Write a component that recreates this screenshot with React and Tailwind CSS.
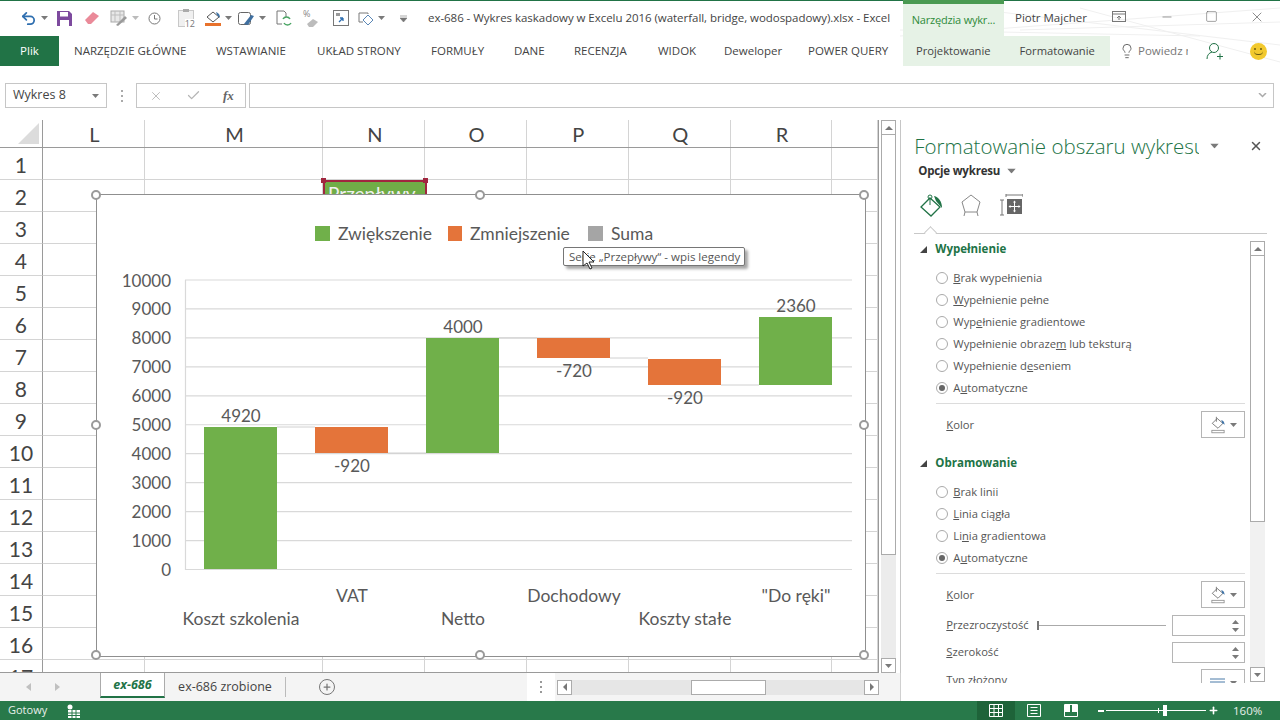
import { Undo2, Minus, Square, X, Lightbulb, Check, Plus } from "lucide-react";

const ui = "font-['Open_Sans','Liberation_Sans',sans-serif]";
const green = "#217346";

const columns = [
  ["L", 102],
  ["M", 179],
  ["N", 102],
  ["O", 102],
  ["P", 102],
  ["Q", 102],
  ["R", 102],
  ["", 46],
];
const rows = [1, 2, 3, 4, 5, 6, 7, 8, 9, 10, 11, 12, 13, 14, 15, 16, 17];

const tabs = [
  ["NARZĘDZIE GŁÓWNE", 113],
  ["WSTAWIANIE", 72],
  ["UKŁAD STRONY", 85],
  ["FORMUŁY", 54],
  ["DANE", 31],
  ["RECENZJA", 55],
  ["WIDOK", 37],
  ["Deweloper", 55],
  ["POWER QUERY", 80],
];

function Caret({ className = "" }) {
  return (
    <svg width="7" height="4" viewBox="0 0 7 4" className={className}>
      <path d="M0 0h7L3.5 4z" fill="#7a7a7a" />
    </svg>
  );
}

function PaintIcon() {
  return (
    <svg width="18" height="18" viewBox="0 0 22 22">
      <path d="M10 3l7 6-6 6-7-6z" fill="#fff" stroke="#666" />
      <path d="M9 1v6" stroke="#666" />
      <path d="M15 5c3 1 4 3 4 6-1-1-2-2-3-2z" fill="#3f74a8" />
      <rect x="3.5" y="17.5" width="15" height="3" fill="#fff" stroke="#8a8a8a" />
    </svg>
  );
}

function QuickBar() {
  return (
    <div className="flex w-[410px] items-center pl-[21px]">
      <Undo2 size={17} color="#2f6fb0" strokeWidth={2.5} className="-ml-[1px]" />
      <Caret className="ml-[4px]" />
      <svg width="15" height="15" viewBox="0 0 15 15" className="ml-[9px]">
        <path d="M0 0h12l3 3v12H0z" fill="#7d4a9e" />
        <rect x="3" y="1" width="8" height="4.5" fill="#fff" />
        <rect x="3" y="9" width="9" height="6" fill="#fff" />
      </svg>
      <svg width="16" height="14" viewBox="0 0 16 14" className="ml-[12px]">
        <path d="M1 9l8-8 6 4-8 8H4z" fill="#ea8a99" />
      </svg>
      <svg width="17" height="16" viewBox="0 0 17 16" className="ml-[10px]">
        <rect x="1" y="1" width="13" height="11" fill="#e8e8e8" stroke="#a9a9a9" />
        <path d="M1 5h13M5 1v11M10 1v11" stroke="#bdbdbd" />
        <path d="M6 15l9-9 2 2-9 8z" fill="#9a9a9a" />
      </svg>
      <Caret className="ml-[5px] opacity-50" />
      <svg width="13" height="13" viewBox="0 0 13 13" className="ml-[9px]">
        <circle cx="6.5" cy="6.5" r="5.5" fill="none" stroke="#777" />
        <path d="M6.5 3v4h3" fill="none" stroke="#777" />
      </svg>
      <div className="relative ml-[17px] h-[17px] w-[16px] border border-[#c8c8c8] bg-[#f0f0f0]">
        <span className="absolute left-[4px] top-[-2px] h-[3px] w-[6px] bg-[#aaa]" />
        <span className="absolute bottom-[-2px] right-[-2px] bg-white text-[9px] leading-none text-[#777]">12</span>
      </div>
      <div className="ml-[11px] flex flex-col items-center">
        <svg width="15" height="12" viewBox="0 0 15 12">
          <path d="M7 1l6 5-6 5-6-5z" fill="#fff" stroke="#555" />
          <path d="M10 1c3 1 4 3 4 6l-3-3z" fill="#3f74a8" />
        </svg>
        <div className="h-[3px] w-[16px] bg-[#e8722c]" />
      </div>
      <Caret className="ml-[4px]" />
      <svg width="17" height="15" viewBox="0 0 17 15" className="ml-[6px]">
        <rect x="0.5" y="1.5" width="12" height="12" rx="2" fill="#fff" stroke="#666" />
        <path d="M6 13l7-9 3 1-6 9z" fill="#3f6fa0" />
      </svg>
      <Caret className="ml-[4px]" />
      <svg width="16" height="17" viewBox="0 0 16 17" className="ml-[10px]">
        <path d="M1 1h7l2 2v4M1 1v13h5" fill="#fff" stroke="#777" />
        <path d="M14 9a4 4 0 0 0-7 0M8 13a4 4 0 0 0 7 0" fill="none" stroke="#4aa564" strokeWidth="1.5" />
      </svg>
      <div className="relative ml-[11px] h-[17px] w-[16px]">
        <span className="absolute left-0 top-[-2px] text-[9px] leading-[11px] text-[#888]">%</span>
        <svg width="12" height="9" viewBox="0 0 12 9" className="absolute bottom-0 right-0">
          <path d="M0 6l6-5 5 3-5 5H2z" fill="#bcbcbc" />
        </svg>
      </div>
      <svg width="16" height="16" viewBox="0 0 16 16" className="ml-[14px]">
        <rect x="0.5" y="0.5" width="15" height="15" fill="#fff" stroke="#777" />
        <path d="M3 3h4v3H3z" fill="#999" />
        <path d="M6 12l4-4M10 8h-3M10 8v3" stroke="#2f6fb0" strokeWidth="1.3" fill="none" />
      </svg>
      <svg width="16" height="15" viewBox="0 0 16 15" className="ml-[9px]">
        <path d="M5 11H1V2h9v1" fill="none" stroke="#7a7a7a" />
        <path d="M10 4l5 5-5 5-5-5z" fill="#fff" stroke="#5a86b5" />
      </svg>
      <Caret className="ml-[4px]" />
      <svg width="7" height="7" viewBox="0 0 7 7" className="ml-[15px]">
        <path d="M0 1h7M0 3h7L3.500 7z" fill="#777" stroke="#777" strokeWidth="0.6" />
      </svg>
    </div>
  );
}

function TitleBar() {
  return (
    <div className={`relative flex h-[35px] items-center pb-[1px] text-[11.5px] text-[#444] ${ui}`}>
      <QuickBar />
      <div className="absolute left-[428px] w-[470px] whitespace-nowrap tracking-[-0.04px]">
        ex-686 - Wykres kaskadowy w Excelu 2016 (waterfall, bridge, wodospadowy).xlsx - Excel
      </div>
      <div className="absolute left-[903px] top-[-1px] flex h-[36px] w-[101px] items-center justify-center border-t-[4px] border-[#4a9a52] bg-[#e6f2e6] text-[11px] tracking-[-0.2px] text-[#2e8b3a]">
        Narzędzia wykr...
      </div>
      <div className="absolute left-[1015px] whitespace-nowrap">Piotr Majcher</div>
      <svg width="14" height="11" viewBox="0 0 14 11" className="absolute left-[1112px] top-[10px]">
        <rect x="0.500" y="0.500" width="13" height="10" fill="none" stroke="#777" />
        <path d="M0 3h14M7 9V5M5 7l2-2 2 2" stroke="#777" fill="none" />
      </svg>
      <Minus size={14} strokeWidth={1} color="#555" className="absolute left-[1160px] top-[9px]" />
      <Square size={13} strokeWidth={1} color="#555" className="absolute left-[1205px] top-[9px]" />
      <X size={16} strokeWidth={1} color="#555" className="absolute left-[1249px] top-[8px]" />
    </div>
  );
}

function RibbonTabs() {
  return (
    <div className={`relative flex h-[30px] items-center text-[11.5px] text-[#444] ${ui}`}>
      <div className="flex h-[30px] w-[59px] items-center justify-center bg-[#217346] text-white">Plik</div>
      <div className="ml-[15px] flex gap-[29px]">
        {tabs.map(([t, w]) => (
          <span key={t} style={{ width: w }} className="whitespace-nowrap">
            {t}
          </span>
        ))}
      </div>
      <div className="ml-[15px] flex h-[30px] w-[207px] items-center gap-[29px] bg-[#e6f2e6] pl-[13px] text-[11.2px]">
        <span>Projektowanie</span>
        <span>Formatowanie</span>
      </div>
      <Lightbulb size={16} strokeWidth={1.3} color="#555" className="ml-[9px]" />
      <span className="ml-[3px] w-[50px] overflow-hidden whitespace-nowrap text-[#777]">Powiedz mi</span>
      <svg width="17" height="18" viewBox="0 0 17 18" fill="none" stroke={green} className="ml-[18px]">
        <circle cx="8" cy="6" r="4.500" />
        <path d="M1 17c0-4 2-6 5-7M11 14.500h6M14 11.500v6" />
      </svg>
      <div className="relative ml-[27px] h-[17px] w-[17px] rounded-full bg-[#f2c92e]">
        <span className="absolute left-[4px] top-[5px] h-[2px] w-[2px] rounded-full bg-[#6a5a10]" />
        <span className="absolute left-[10px] top-[5px] h-[2px] w-[2px] rounded-full bg-[#6a5a10]" />
        <span className="absolute left-[4px] top-[8px] h-[4px] w-[9px] rounded-b-full border-b border-[#6a5a10]" />
      </div>
    </div>
  );
}

function FormulaBar() {
  return (
    <div className={`mt-[17px] flex h-[25px] items-center pl-[5px] text-[#444] ${ui}`}>
      <div className="flex h-full w-[102px] items-center justify-between border border-[#c6c6c6] pl-[7px] pr-[7px] text-[12.500px]">
        Wykres 8
        <Caret />
      </div>
      <div className="ml-[14px] mr-[13px] flex flex-col gap-[3px]">
        <span className="h-[2px] w-[2px] bg-[#aaa]" />
        <span className="h-[2px] w-[2px] bg-[#aaa]" />
        <span className="h-[2px] w-[2px] bg-[#aaa]" />
      </div>
      <div className="flex h-full w-[110px] items-center border border-[#c6c6c6]">
        <X size={14} color="#b5b5b5" strokeWidth={1.5} className="ml-[12px]" />
        <Check size={15} color="#b5b5b5" strokeWidth={2} className="ml-[23px]" />
        <span className="ml-[22px] font-['Liberation_Serif',serif] text-[13px] font-bold italic text-[#666]">fx</span>
      </div>
      <div className="ml-[3px] flex h-full w-[1025px] items-center justify-end border border-[#c6c6c6] pr-[6px]">
        <svg width="9" height="5" viewBox="0 0 9 5">
          <path d="M1 0l3.500 3.500L8 0" fill="none" stroke="#aaa" strokeWidth="1.500" />
        </svg>
      </div>
    </div>
  );
}

function Grid() {
  return (
    <div className="font-['Lato','Liberation_Sans',sans-serif] text-[#444]">
      <div className="flex h-[28px] border-b border-[#9a9a9a]">
        <div className="relative w-[43px] border-r border-[#9a9a9a]">
          <div className="absolute bottom-[3px] right-[3px] h-0 w-0 border-b-[21px] border-l-[21px] border-b-[#dcdcdc] border-l-transparent" />
        </div>
        {columns.map(([c, w], i) => (
          <div
            key={i}
            style={{ width: w }}
            className="flex items-center justify-center border-r border-[#d4d4d4] pl-[2px] text-[20px]"
          >
            {c}
          </div>
        ))}
      </div>
      {rows.map((r) => (
        <div key={r} className="flex h-[32px]">
          <div className="flex w-[43px] items-center justify-center border-b border-r border-b-[#d4d4d4] border-r-[#9a9a9a] pt-[2px] text-[21px]">
            {r}
          </div>
          {columns.map(([c, w], i) => (
            <div key={i} style={{ width: w }} className="border-b border-r border-[#d4d4d4]" />
          ))}
        </div>
      ))}
    </div>
  );
}

function Handle({ className }) {
  return <div className={`absolute h-[10px] w-[10px] rounded-full border-2 border-[#9a9a9a] bg-white ${className}`} />;
}

const gridY = [0, 1, 2, 3, 4, 5, 6, 7, 8, 9, 10];
const bars = [
  [204, 427, 569, "#70b04a", "4920", 241, 422],
  [315, 427, 453, "#e4743a", "-920", 352, 472],
  [426, 338, 453, "#70b04a", "4000", 463, 333],
  [537, 338, 358, "#e4743a", "-720", 574, 377],
  [648, 359, 385, "#e4743a", "-920", 685, 404],
  [759, 317, 385, "#70b04a", "2360", 796, 312],
];
const connectors = [
  [277, 315, 427],
  [388, 426, 453],
  [499, 537, 338],
  [610, 648, 358],
  [721, 759, 385],
];
const categories = [
  ["Koszt szkolenia", 241, 625],
  ["VAT", 352, 602],
  ["Netto", 463, 625],
  ["Dochodowy", 574, 602],
  ["Koszty stałe", 685, 625],
  ['"Do ręki"', 796, 602],
];

function WaterfallChart() {
  return (
    <svg
      width="768"
      height="461"
      viewBox="97 195 768 461"
      className="font-['Lato','Liberation_Sans',sans-serif]"
      fill="#595959"
    >
      {gridY.map((g) => (
        <path key={g} d={`M185 ${569.5 - g * 28.95}H852`} stroke="#d9d9d9" strokeWidth="1.200" />
      ))}
      <path d="M185.500 280V570" stroke="#d9d9d9" strokeWidth="1.200" />
      {gridY.map((g) => (
        <text key={g} x="171" y={576 - g * 28.95} textAnchor="end" fontSize="17">
          {g * 1000}
        </text>
      ))}
      {connectors.map(([a, b, y], i) => (
        <path key={i} d={`M${a} ${y}H${b}`} stroke="#d0d0d0" />
      ))}
      {bars.map(([x, y1, y2, fill, label, cx, ty]) => (
        <g key={cx}>
          <rect x={x} y={y1} width="73" height={y2 - y1} fill={fill} />
          <text x={cx} y={ty} textAnchor="middle" fontSize="17">
            {label}
          </text>
        </g>
      ))}
      {categories.map(([label, cx, y]) => (
        <text key={label} x={cx} y={y} textAnchor="middle" fontSize="17.500">
          {label}
        </text>
      ))}
      <rect x="315" y="226" width="15" height="15" fill="#70b04a" />
      <text x="338" y="240" fontSize="17.500">Zwiększenie</text>
      <rect x="448" y="226" width="14" height="15" fill="#e4743a" />
      <text x="470" y="240" fontSize="17.500">Zmniejszenie</text>
      <rect x="588" y="226" width="15" height="15" fill="#a5a5a5" />
      <text x="611" y="240" fontSize="17.500">Suma</text>
    </svg>
  );
}

function Sheet() {
  return (
    <div className="relative h-[553px] w-[880px] overflow-hidden border-b border-r border-[#9a9a9a]">
      <Grid />
      {/* kształt pod wykresem */}
      <div className="absolute left-[323px] top-[60px] h-[30px] w-[104px] overflow-hidden border-2 border-[#a0263f] bg-[#70ad47] pl-[3px] font-['Lato',sans-serif] text-[19px] leading-[24px] whitespace-nowrap text-[#f0f0f0]">
        Przepływy
      </div>
      <div className="absolute left-[321px] top-[58px] h-[5px] w-[5px] bg-[#a0263f]" />
      <div className="absolute left-[423px] top-[58px] h-[5px] w-[5px] bg-[#a0263f]" />
      <div className="absolute left-[97px] top-[75px] h-[461px] w-[768px] bg-white outline outline-[1.500px] outline-[#8f8f8f]">
        <WaterfallChart />
      </div>
      <Handle className="left-[91px] top-[70px]" />
      <Handle className="left-[475px] top-[70px]" />
      <Handle className="left-[859px] top-[70px]" />
      <Handle className="left-[91px] top-[300px]" />
      <Handle className="left-[859px] top-[300px]" />
      <Handle className="left-[91px] top-[530px]" />
      <Handle className="left-[475px] top-[530px]" />
      <Handle className="left-[859px] top-[530px]" />
      <div
        className={`absolute left-[563px] top-[127px] flex h-[19px] w-[182px] items-center rounded-[2px] border border-[#767676] bg-white pl-[5px] text-[11.5px] whitespace-nowrap text-[#555] shadow-[3px_3px_3px_rgba(0,0,0,0.35)] ${ui}`}
      >
        Serie „Przepływy“ - wpis legendy
      </div>
      <svg width="13" height="20" viewBox="0 0 13 20" className="absolute left-[582px] top-[130px]">
        <path d="M1 1v15l4-3 3 6 2-1-3-6h5z" fill="#fff" stroke="#222" />
      </svg>
    </div>
  );
}

function VerticalScroll() {
  return (
    <div className="ml-[2px] flex h-[553px] w-[15px] flex-col">
      <div className="flex h-[15px] items-center justify-center border border-[#ababab] bg-white">
        <svg width="8" height="4" viewBox="0 0 8 4">
          <path d="M0 4h8L4 0z" fill="#777" />
        </svg>
      </div>
      <div className="h-[420px] border-x border-b border-[#ababab] bg-white" />
      <div className="flex-1 bg-[#ececec]" />
      <div className="flex h-[15px] items-center justify-center border border-[#ababab] bg-white">
        <Caret />
      </div>
    </div>
  );
}

function SectionTitle({ children }) {
  return (
    <div className="flex h-[20px] items-center pt-[2px] text-[11.5px] font-bold text-[#217346]">
      <svg width="7" height="7" viewBox="0 0 7 7" className="mr-[8px] ml-[7px]">
        <path d="M7 0v7H0z" fill="#444" />
      </svg>
      {children}
    </div>
  );
}

function Radio({ label, at, checked }) {
  return (
    <div className="flex h-[22px] items-center pl-[23px] text-[11.2px] text-[#555]">
      <span className="mr-[5px] flex h-[12px] w-[12px] items-center justify-center rounded-full border border-[#aaa] bg-white">
        {checked && <span className="h-[6px] w-[6px] rounded-full bg-[#666]" />}
      </span>
      <span>
        {label.slice(0, at)}
        <span className="underline">{label[at]}</span>
        {label.slice(at + 1)}
      </span>
    </div>
  );
}

function ColorButton() {
  return (
    <div className="flex h-[27px] items-center justify-between pl-[33px] pr-[5px] text-[11.2px] text-[#555]">
      <span className="pt-[2px]">
        <span className="underline">K</span>olor
      </span>
      <div className="flex h-[27px] w-[44px] items-center justify-center gap-[3px] border border-[#b5b5b5]">
        <PaintIcon />
        <Caret />
      </div>
    </div>
  );
}

function SpinBox() {
  return (
    <div className="flex h-[21px] w-[73px] flex-col items-end justify-center gap-[4px] border border-[#b5b5b5] pr-[5px]">
      <svg width="7" height="4" viewBox="0 0 7 4">
        <path d="M0 4h7L3.500 0z" fill="#7a7a7a" />
      </svg>
      <Caret />
    </div>
  );
}

function FormatPane() {
  return (
    <div className={`ml-[4px] flex h-[581px] w-[380px] flex-col border-l border-[#c6c6c6] pt-[10px] ${ui}`}>
      <div className="relative flex h-[32px] items-center pl-[13px]">
        <div className="w-[285px] overflow-hidden whitespace-nowrap text-[20.5px] font-light text-[#217346]">
          Formatowanie obszaru wykresu
        </div>
        <Caret className="ml-[12px] scale-125" />
        <X size={14} strokeWidth={2.500} color="#555" className="ml-[31px]" />
      </div>
      <div className="flex h-[18px] items-center pl-[17px] text-[11.5px] font-bold tracking-[-0.2px] text-[#333]">
        Opcje wykresu
        <Caret className="ml-[8px] scale-125" />
      </div>
      <div className="flex h-[50px] items-center pl-[18px]">
        <svg width="25" height="24" viewBox="0 0 25 24">
          <path d="M11 5l10 9-9 9-10-9z" fill="#fff" stroke="#217346" strokeWidth="1.300" />
          <circle cx="11" cy="4" r="2" fill="none" stroke="#217346" />
          <path d="M11 5v7" stroke="#217346" />
          <path d="M15 3c5 1 8 6 8 12l-6-7z" fill="#217346" />
        </svg>
        <svg width="22" height="24" viewBox="0 0 22 24" className="ml-[16px]">
          <path d="M11 2l9 7-3 10H5L2 9z" fill="#fff" stroke="#888" />
          <path d="M5 19l-1 4M17 19l1 4" stroke="#888" />
        </svg>
        <svg width="23" height="22" viewBox="0 0 23 22" className="ml-[18px]">
          <path d="M2 6v15M0 6h4M0 21h4M6 1h17M6 0v3M23 0v3" stroke="#777" fill="none" />
          <rect x="7" y="5" width="15" height="15" fill="#666" />
          <path d="M14.500 8v9M10 12.500h9" stroke="#fff" />
          <path d="M14.500 6.500l-1.500 2h3zM14.500 18.500l-1.500-2h3zM8.500 12.500l2-1.500v3zM20.500 12.500l-2-1.500v3z" fill="#fff" />
        </svg>
      </div>
      <div className="relative mx-[13px] mt-[3px] h-[1px] bg-[#c8c8c8]">
        <div className="absolute left-[12px] top-[-5px] h-[9px] w-[9px] rotate-45 border-l border-t border-[#c8c8c8] bg-white" />
      </div>
      <div className="flex min-h-0 flex-1 pt-[4px]">
        <div className="h-[445px] w-[349px] overflow-hidden pl-[12px]">
          <SectionTitle>Wypełnienie</SectionTitle>
          <div className="h-[9px]" />
          <Radio label="Brak wypełnienia" at={0} />
          <Radio label="Wypełnienie pełne" at={0} />
          <Radio label="Wypełnienie gradientowe" at={3} />
          <Radio label="Wypełnienie obrazem lub teksturą" at={18} />
          <Radio label="Wypełnienie deseniem" at={13} />
          <Radio label="Automatyczne" at={1} checked />
          <div className="ml-[23px] mr-[5px] mt-[4px] h-[1px] bg-[#dcdcdc]" />
          <div className="h-[7px]" />
          <ColorButton />
          <div className="h-[14px]" />
          <SectionTitle>Obramowanie</SectionTitle>
          <div className="h-[9px]" />
          <Radio label="Brak linii" at={0} />
          <Radio label="Linia ciągła" at={0} />
          <Radio label="Linia gradientowa" at={2} />
          <Radio label="Automatyczne" at={1} checked />
          <div className="ml-[23px] mr-[5px] mt-[4px] h-[1px] bg-[#dcdcdc]" />
          <div className="h-[7px]" />
          <ColorButton />
          <div className="mt-[7px] flex items-center pl-[33px] pr-[5px] text-[11.2px] text-[#555]">
            <span className="w-[91px]">
              <span className="underline">P</span>rzezroczystość
            </span>
            <div className="relative h-[1px] w-[129px] bg-[#aaa]">
              <div className="absolute left-0 top-[-4px] h-[9px] w-[2px] bg-[#777]" />
            </div>
            <div className="ml-[6px]">
              <SpinBox />
            </div>
          </div>
          <div className="mt-[6px] flex items-center justify-between pl-[33px] pr-[5px] text-[11.2px] text-[#555]">
            <span>
              <span className="underline">S</span>zerokość
            </span>
            <SpinBox />
          </div>
          <div className="mt-[6px] flex items-start justify-between pl-[33px] pr-[5px] text-[11.2px] text-[#555]">
            <span className="mt-[3px]">
              <span className="underline">T</span>yp złożony
            </span>
            <div className="flex h-[27px] w-[44px] items-center justify-center gap-[5px] border border-[#b5b5b5]">
              <svg width="15" height="9" viewBox="0 0 15 9">
                <path d="M0 1h15M0 4h15M0 8h15" stroke="#4a7ba8" />
              </svg>
              <Caret />
            </div>
          </div>
        </div>
        <div className="mt-[3px] flex h-[441px] w-[15px] flex-col">
          <div className="flex h-[15px] items-center justify-center border border-[#ababab] bg-white">
            <svg width="8" height="4" viewBox="0 0 8 4">
              <path d="M0 4h8L4 0z" fill="#777" />
            </svg>
          </div>
          <div className="h-[266px] border-x border-b border-[#ababab] bg-white" />
          <div className="flex-1 bg-[#f1f1f1]" />
          <div className="flex h-[15px] items-center justify-center border border-[#ababab] bg-white">
            <Caret />
          </div>
        </div>
      </div>
    </div>
  );
}

function SheetTabs() {
  return (
    <div className={`flex h-[28px] w-[901px] items-center border-r border-[#d0d0d0] bg-[#f4f4f4] text-[12.5px] text-[#444] ${ui}`}>
      <div className="flex w-[100px] items-center pl-[26px]">
        <svg width="5" height="8" viewBox="0 0 5 8"><path d="M5 0v8L0 4z" fill="#c0c0c0" /></svg>
        <svg width="5" height="8" viewBox="0 0 5 8" className="ml-[24px]"><path d="M0 0v8l5-4z" fill="#c0c0c0" /></svg>
      </div>
      <div className="flex h-[25px] w-[65px] items-center justify-center self-start border-x border-b-2 border-x-[#ababab] border-b-[#217346] bg-white pt-[1px] font-bold italic text-[#217346]">
        ex-686
      </div>
      <div className="flex w-[120px] justify-center">ex-686 zrobione</div>
      <div className="h-[20px] w-[1px] bg-[#bbb]" />
      <div className="ml-[33px] flex h-[16px] w-[16px] items-center justify-center rounded-full border border-[#777]">
        <Plus size={10} strokeWidth={3} color="#777" />
      </div>
      <div className="ml-[192px] flex h-full w-[28px] flex-col items-center justify-center gap-[3px] bg-white">
        <span className="h-[2px] w-[2px] bg-[#999]" />
        <span className="h-[2px] w-[2px] bg-[#999]" />
        <span className="h-[2px] w-[2px] bg-[#999]" />
      </div>
      <div className="ml-[2px] flex h-[15px] w-[322px] bg-[#e6e6e6]">
        <div className="flex w-[15px] items-center justify-center border border-[#ababab] bg-white">
          <svg width="4" height="8" viewBox="0 0 4 8"><path d="M4 0v8L0 4z" fill="#777" /></svg>
        </div>
        <div className="ml-[119px] w-[75px] border border-[#ababab] bg-white" />
        <div className="ml-auto flex w-[15px] items-center justify-center border border-[#ababab] bg-white">
          <svg width="4" height="8" viewBox="0 0 4 8"><path d="M0 0v8l4-4z" fill="#777" /></svg>
        </div>
      </div>
    </div>
  );
}

function StatusBar() {
  return (
    <div className={`flex h-[19px] items-center bg-[#28794a] text-[11px] text-[#e8f0ea] ${ui}`}>
      <span className="ml-[8px] w-[39px]">Gotowy</span>
      <svg width="13" height="14" viewBox="0 0 13 14" className="ml-[20px]">
        <circle cx="3" cy="3" r="2.500" fill="#fff" />
        <rect x="1" y="6" width="12" height="8" fill="#fff" />
        <path d="M1 9h12M1 11.500h12M5 6v8M9 6v8" stroke="#28794a" />
      </svg>
      <div className="ml-auto flex h-[19px] w-[38px] items-center justify-center bg-[#1e6339]">
        <svg width="14" height="13" viewBox="0 0 14 13">
          <path d="M.5 .5h13v12H.5zM.5 4.500h13M.5 8.500h13M5 .5v12M9.500 .5v12" fill="none" stroke="#fff" />
        </svg>
      </div>
      <svg width="14" height="13" viewBox="0 0 14 13" className="ml-[12px]">
        <path d="M.5 .5h13v12H.5z" fill="none" stroke="#fff" />
        <path d="M3.500 3.500h7M3.500 6.500h7M3.500 9.500h7" stroke="#fff" />
      </svg>
      <svg width="14" height="13" viewBox="0 0 14 13" className="ml-[23px]">
        <path d="M.5 .5h13v12H.5z" fill="none" stroke="#fff" />
        <path d="M1 1h5v7H1zM8 1h5v7H8z" fill="#fff" />
      </svg>
      <div className="ml-[20px] h-[2px] w-[6px] bg-white" />
      <div className="relative ml-[2px] h-[1px] w-[100px] bg-white">
        <div className="absolute left-[52px] top-[-2px] h-[5px] w-[1px] bg-white" />
        <div className="absolute left-[57px] top-[-5px] h-[11px] w-[4px] bg-white" />
      </div>
      <Plus size={11} strokeWidth={3.500} color="#fff" className="ml-[2px]" />
      <span className="ml-[14px] mr-[19px] w-[28px] whitespace-nowrap text-[11.5px]">160%</span>
    </div>
  );
}

export default function App() {
  return (
    <div className="relative h-[720px] w-[1280px] overflow-hidden bg-white">
      <div className="h-[1px] bg-[#217346]" />
      <svg width="380" height="65" viewBox="0 0 380 65" className="absolute right-0 top-0">
        <path d="M0 36L380 8M40 5L380 45M120 30L380 22M0 30L300 36M180 8L380 62" stroke="#f0f0f0" fill="none" />
      </svg>
      <div className="relative">
        <TitleBar />
        <RibbonTabs />
        <FormulaBar />
        <div className="mt-[12px] flex">
          <Sheet />
          <VerticalScroll />
          <FormatPane />
        </div>
      </div>
      <div className="absolute bottom-[19px] left-0">
        <SheetTabs />
      </div>
      <div className="absolute bottom-0 left-0 right-0">
        <StatusBar />
      </div>
    </div>
  );
}
